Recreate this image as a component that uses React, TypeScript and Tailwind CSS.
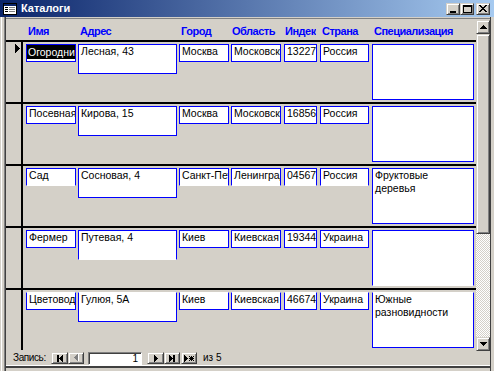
import React from "react";

const RAISED =
  "border border-t-[#d4d0c8] border-l-[#d4d0c8] border-r-[#404040] border-b-[#404040] shadow-[inset_1px_1px_0_#ffffff,inset_-1px_-1px_0_#808080] bg-[#d4d0c8]";

function TriLeft({ c = "#000", x = 0 }: { c?: string; x?: number }) {
  return (
    <g fill={c}>
      <rect x={x} y={3} width={1} height={1} />
      <rect x={x + 1} y={2} width={1} height={3} />
      <rect x={x + 2} y={1} width={1} height={5} />
      <rect x={x + 3} y={0} width={1} height={7} />
    </g>
  );
}
function TriRight({ c = "#000", x = 0 }: { c?: string; x?: number }) {
  return (
    <g fill={c}>
      <rect x={x} y={0} width={1} height={7} />
      <rect x={x + 1} y={1} width={1} height={5} />
      <rect x={x + 2} y={2} width={1} height={3} />
      <rect x={x + 3} y={3} width={1} height={1} />
    </g>
  );
}

function TitleIcon() {
  return (
    <svg width="16" height="14" shapeRendering="crispEdges" className="shrink-0">
      <rect x="1" y="1" width="14" height="12" fill="#ffffff" />
      <rect x="1" y="1" width="14" height="3" fill="#0a246a" />
      <rect x="1" y="1" width="14" height="1" fill="#000" />
      <rect x="1" y="12" width="14" height="1" fill="#000" />
      <rect x="1" y="1" width="1" height="12" fill="#000" />
      <rect x="14" y="1" width="1" height="12" fill="#000" />
      <rect x="3" y="5" width="3" height="1" fill="#000" />
      <rect x="7" y="5" width="6" height="1" fill="#808080" />
      <rect x="3" y="7" width="3" height="1" fill="#000" />
      <rect x="7" y="7" width="6" height="1" fill="#808080" />
      <rect x="3" y="9" width="3" height="1" fill="#000" />
      <rect x="7" y="9" width="6" height="1" fill="#808080" />
    </svg>
  );
}

function CapButton({ kind }: { kind: "min" | "max" | "close" }) {
  return (
    <div className={`w-[14px] h-[12px] flex items-center justify-center ${RAISED}`}>
      {kind === "min" && (
        <svg width="8" height="8" shapeRendering="crispEdges">
          <rect x="1" y="6" width="6" height="2" fill="#000" />
        </svg>
      )}
      {kind === "max" && (
        <svg width="9" height="8" shapeRendering="crispEdges">
          <rect x="0" y="0" width="9" height="2" fill="#000" />
          <rect x="0" y="0" width="1" height="8" fill="#000" />
          <rect x="8" y="0" width="1" height="8" fill="#000" />
          <rect x="0" y="7" width="9" height="1" fill="#000" />
        </svg>
      )}
      {kind === "close" && (
        <svg width="8" height="7" shapeRendering="crispEdges">
          {[0, 1, 2, 3, 4, 5, 6].map((i) => (
            <g key={i} fill="#000">
              <rect x={i} y={i} width={2} height={1} />
              <rect x={6 - i} y={i} width={2} height={1} />
            </g>
          ))}
        </svg>
      )}
    </div>
  );
}

function TitleBar() {
  return (
    <div className="h-[17px] shrink-0 flex items-center pl-[2px] pr-[4px] bg-[linear-gradient(to_right,#0a246a,#a6caf0)]">
      <TitleIcon />
      <span className="ml-[3px] text-[11px] leading-[17px] font-bold text-white">Каталоги</span>
      <div className="ml-auto flex items-center">
        <CapButton kind="min" />
        <CapButton kind="max" />
        <div className="w-[2px]" />
        <CapButton kind="close" />
      </div>
    </div>
  );
}

type Row = {
  name: string;
  addr: string;
  city: string;
  obl: string;
  idx: string;
  country: string;
  spec: string[];
  v: number;
  selected?: boolean;
};

const rows: Row[] = [
  { name: "Огородник", addr: "Лесная, 43", city: "Москва", obl: "Московская", idx: "13227", country: "Россия", spec: [], v: 0, selected: true },
  { name: "Посевная", addr: "Кирова, 15", city: "Москва", obl: "Московская", idx: "16856", country: "Россия", spec: [], v: 0 },
  { name: "Сад", addr: "Сосновая, 4", city: "Санкт-Петербург", obl: "Ленинградская", idx: "04567", country: "Россия", spec: ["Фруктовые", "деревья"], v: 1 },
  { name: "Фермер", addr: "Путевая, 4", city: "Киев", obl: "Киевская", idx: "19344", country: "Украина", spec: [], v: 2 },
  { name: "Цветовод", addr: "Гулюя, 5А", city: "Киев", obl: "Киевская", idx: "46674", country: "Украина", spec: ["Южные", "разновидности"], v: 3 },
];

function Box({ className, children }: { className: string; children?: React.ReactNode }) {
  return (
    <div
      className={`shrink-0 overflow-hidden bg-white border border-[#0000ff] text-[10.5px] leading-[13px] whitespace-nowrap text-black ${className}`}
    >
      {children}
    </div>
  );
}

function single(v: number) {
  if (v === 1) return "border-b-white";
  if (v === 3) return "border-t-white";
  return "";
}
function multi(v: number) {
  if (v === 2) return "border-b-white";
  if (v === 3) return "border-t-white";
  return "";
}

function RecordRow({ r, current }: { r: Row; current?: boolean }) {
  const s = single(r.v);
  const m = multi(r.v);
  return (
    <div className="flex flex-col h-[62px] shrink-0">
      <div className="h-[2px] bg-black" />
      <div className="flex h-[60px]">
        <div className="w-[15px] shrink-0 pl-[9px] pt-[2px]">
          {current && (
            <svg width="5" height="9" shapeRendering="crispEdges">
              <g fill="#000">
                <rect x="0" y="0" width="1" height="9" />
                <rect x="1" y="1" width="1" height="7" />
                <rect x="2" y="2" width="1" height="5" />
                <rect x="3" y="3" width="1" height="3" />
                <rect x="4" y="4" width="1" height="1" />
              </g>
            </svg>
          )}
        </div>
        <div className="w-[2px] bg-black shrink-0" />
        <div className="flex items-start pt-[2px]">
          <Box className={`ml-[3px] w-[50px] h-[18px] ${r.selected ? "" : "pl-[2px]"} ${s}`}>
            {r.selected ? (
              <div className="bg-black text-white pl-[1px] h-[14px] leading-[14px]">{r.name}</div>
            ) : (
              r.name
            )}
          </Box>
          <Box className={`ml-[2px] w-[99px] h-[30px] pl-[2px] ${m}`}>{r.addr}</Box>
          <Box className={`ml-[2px] w-[50px] h-[18px] pl-[2px] ${s}`}>{r.city}</Box>
          <Box className={`ml-[2px] w-[50px] h-[18px] pl-[2px] ${s}`}>{r.obl}</Box>
          <Box className={`ml-[3px] w-[33px] h-[18px] pl-[2px] ${s}`}>{r.idx}</Box>
          <Box className={`ml-[3px] w-[49px] h-[18px] pl-[2px] ${s}`}>{r.country}</Box>
          <Box className={`ml-[3px] w-[102px] h-[56px] pl-[2px] ${m}`}>
            {r.spec.map((l) => (
              <div key={l}>{l}</div>
            ))}
          </Box>
        </div>
      </div>
    </div>
  );
}

function Header() {
  const lab = "shrink-0 overflow-hidden whitespace-nowrap text-[11px] leading-[18px] font-bold text-[#0000ff] tracking-[-0.5px]";
  return (
    <div className="h-[20px] shrink-0 flex items-start pt-[2px]">
      <div className="w-[17px] shrink-0" />
      <div className={`${lab} ml-[3px] w-[50px] pl-[2px]`}>Имя</div>
      <div className={`${lab} ml-[2px] w-[99px] pl-[2px]`}>Адрес</div>
      <div className={`${lab} ml-[2px] w-[50px] pl-[2px]`}>Город</div>
      <div className={`${lab} ml-[2px] w-[50px] pl-[1px]`}>Область</div>
      <div className={`${lab} ml-[3px] w-[32px] pl-[1px]`}>Индекс</div>
      <div className={`${lab} ml-[4px] w-[49px] pl-[2px]`}>Страна</div>
      <div className={`${lab} ml-[3px] w-[102px] pl-[2px]`}>Специализация</div>
    </div>
  );
}

function Scrollbar() {
  return (
    <div className="w-[14px] shrink-0 flex flex-col">
      <div className={`h-[14px] shrink-0 flex items-center justify-center ${RAISED}`}>
        <svg width="7" height="4" shapeRendering="crispEdges">
          <rect x="3" y="0" width="1" height="1" fill="#000" />
          <rect x="2" y="1" width="3" height="1" fill="#000" />
          <rect x="1" y="2" width="5" height="1" fill="#000" />
          <rect x="0" y="3" width="7" height="1" fill="#000" />
        </svg>
      </div>
      <div className={`h-[200px] shrink-0 ${RAISED}`} />
      <div className="flex-1 bg-[image:repeating-conic-gradient(#ffffff_0%_25%,#d4d0c8_0%_50%)] bg-[length:2px_2px]" />
      <div className={`h-[14px] shrink-0 flex items-center justify-center ${RAISED}`}>
        <svg width="7" height="4" shapeRendering="crispEdges">
          <rect x="0" y="0" width="7" height="1" fill="#000" />
          <rect x="1" y="1" width="5" height="1" fill="#000" />
          <rect x="2" y="2" width="3" height="1" fill="#000" />
          <rect x="3" y="3" width="1" height="1" fill="#000" />
        </svg>
      </div>
    </div>
  );
}

function NavBtn({ w, children }: { w: string; children: React.ReactNode }) {
  return <div className={`${w} h-[12px] shrink-0 flex items-center justify-center ${RAISED}`}>{children}</div>;
}

function Nav() {
  return (
    <div className="h-[14px] shrink-0 flex items-center pl-[7px] text-black">
      <div className="w-[38px] shrink-0 text-[10px] leading-[12px] tracking-[-0.4px]">Запись:</div>
      <NavBtn w="w-[17px]">
        <svg width="6" height="7" shapeRendering="crispEdges">
          <rect x="0" y="0" width="2" height="7" fill="#000" />
          <TriLeft x={2} />
        </svg>
      </NavBtn>
      <NavBtn w="w-[16px]">
        <svg width="5" height="8" shapeRendering="crispEdges">
          <TriLeft c="#ffffff" x={1} />
          <TriLeft c="#808080" />
        </svg>
      </NavBtn>
      <div className="ml-[4px] w-[54px] h-[13px] shrink-0 bg-white border border-t-[#808080] border-l-[#808080] border-r-white border-b-white shadow-[inset_1px_1px_0_#404040] text-[10px] leading-[11px] text-right pr-[3px]">
        1
      </div>
      <div className="ml-[5px]" />
      <NavBtn w="w-[17px]">
        <svg width="4" height="7" shapeRendering="crispEdges">
          <TriRight />
        </svg>
      </NavBtn>
      <NavBtn w="w-[16px]">
        <svg width="6" height="7" shapeRendering="crispEdges">
          <TriRight />
          <rect x="4" y="0" width="2" height="7" fill="#000" />
        </svg>
      </NavBtn>
      <div className="ml-[1px]" />
      <NavBtn w="w-[16px]">
        <svg width="10" height="7" shapeRendering="crispEdges">
          <TriRight />
          <g fill="#000">
            <rect x="7" y="1" width="1" height="5" />
            <rect x="5" y="3" width="5" height="1" />
            <rect x="5" y="1" width="1" height="1" />
            <rect x="6" y="2" width="1" height="1" />
            <rect x="9" y="1" width="1" height="1" />
            <rect x="8" y="2" width="1" height="1" />
            <rect x="5" y="5" width="1" height="1" />
            <rect x="6" y="4" width="1" height="1" />
            <rect x="9" y="5" width="1" height="1" />
            <rect x="8" y="4" width="1" height="1" />
          </g>
        </svg>
      </NavBtn>
      <div className="ml-[6px] text-[10px] leading-[12px]">из 5</div>
    </div>
  );
}

export default function App() {
  return (
    <div className="w-[494px] h-[371px] overflow-hidden bg-[#d4d0c8] flex flex-col font-['Liberation_Sans',Arial,sans-serif] select-none">
      <TitleBar />
      <div className="flex flex-1 min-h-0">
        <div className="w-[6px] shrink-0 flex">
          <div className="w-[1px] bg-[#d4d0c8]" />
          <div className="w-[1px] bg-white" />
          <div className="w-[2px] bg-[#d4d0c8]" />
          <div className="w-[1px] bg-[#808080]" />
          <div className="w-[1px] bg-[#404040]" />
        </div>
        <div className="w-[484px] shrink-0 flex flex-col">
          <div className="h-[1px] bg-[#d4d0c8]" />
          <div className="h-[1px] bg-[#808080]" />
          <div className="h-[1px] bg-[#d4d0c8]" />
          <div className="flex h-[331px] shrink-0">
            <div className="w-[470px] shrink-0 flex flex-col overflow-hidden">
              <Header />
              {rows.map((r, i) => (
                <RecordRow key={i} r={r} current={i === 0} />
              ))}
            </div>
            <Scrollbar />
          </div>
          <Nav />
          <div className="h-[1px] bg-white" />
          <div className="h-[2px] bg-[#404040]" />
        </div>
        <div className="w-[4px] shrink-0 flex">
          <div className="w-[1px] bg-[#404040]" />
        </div>
      </div>
    </div>
  );
}
